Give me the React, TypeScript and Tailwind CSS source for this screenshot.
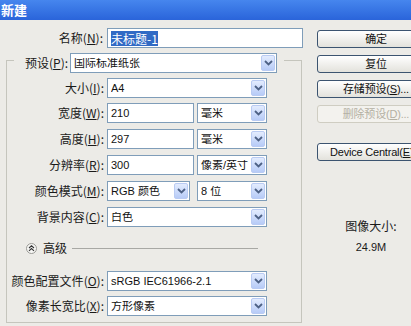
import React from "react";

function Arrow() {
  return (
    <div className="flex h-[16px] w-[14px] shrink-0 items-center justify-center rounded-[2px] border border-[#b9cbf3] bg-gradient-to-b from-[#e3ecfe] to-[#b7cbf7]">
      <svg width="9" height="6" viewBox="0 0 9 6">
        <polyline points="1,1 4.5,4.5 8,1" fill="none" stroke="#4d6185" strokeWidth="1.8" />
      </svg>
    </div>
  );
}

function Select({ value, w }: { value: string; w: string }) {
  return (
    <div className={`flex h-[20px] ${w} shrink-0 items-center border border-[#7f9db9] bg-white pl-[3px] pr-[1px] font-['Liberation_Sans','Noto_Sans_CJK_SC',sans-serif] text-[11px] text-[#111]`}>
      <span className="flex-1 truncate leading-none">{value}</span>
      <Arrow />
    </div>
  );
}

function Input({ value, w }: { value: string; w: string }) {
  return (
    <div className={`flex h-[20px] ${w} shrink-0 items-center border border-[#7f9db9] bg-white pl-[3px] font-['Liberation_Sans','Noto_Sans_CJK_SC',sans-serif] text-[11px] text-[#111]`}>
      <span className="leading-none">{value}</span>
    </div>
  );
}

function Label({ text, k }: { text: string; k: string }) {
  return (
    <div className="w-[100px] shrink-0 pr-[3px] text-right font-['Noto_Sans_CJK_SC',sans-serif] text-[12px] leading-none text-[#1a1a1a]">
      {text}(<u>{k}</u>):
    </div>
  );
}

function Row({ children, mt }: { children: React.ReactNode; mt: string }) {
  return <div className={`flex h-[20px] items-center ${mt}`}>{children}</div>;
}

function Btn({ children, disabled, mt }: { children: React.ReactNode; disabled?: boolean; mt: string }) {
  return (
    <div
      className={`flex h-[18px] w-[118px] items-center justify-center rounded-[3px] border ${mt} ${
        disabled
          ? "border-[#cfcdc2] bg-[#f3f2ee] text-[#b3b0a3]"
          : "border-[#3c5470] bg-gradient-to-b from-[#ffffff] to-[#e3e2dc] text-[#111]"
      } font-['Liberation_Sans','Noto_Sans_CJK_SC',sans-serif] text-[11px] leading-none tracking-[-0.2px] whitespace-nowrap`}
    >
      {children}
    </div>
  );
}

export default function App() {
  return (
    <div className="h-[326px] w-[411px] overflow-hidden bg-[#ecebe7]">
      <div className="flex h-[20px] items-center bg-gradient-to-b from-[#4686ee] to-[#2a64da] pl-[1px] font-['Noto_Sans_CJK_SC',sans-serif] text-[13px] font-bold text-white">
        新建
      </div>
      <div className="flex pt-[8px]">
        <div className="w-[303px] shrink-0">
          <div className="flex h-[20px] items-center">
            <div className="w-[104px] shrink-0 pr-[1px] text-right font-['Noto_Sans_CJK_SC',sans-serif] text-[12px] leading-none text-[#1a1a1a]">
              名称(<u>N</u>):
            </div>
            <div className="ml-[3px] flex h-[20px] w-[196px] items-center border border-[#7f9db9] bg-white pl-[3px] font-['Noto_Sans_CJK_SC',sans-serif] text-[12px]">
              <span className="bg-[#316ac5] leading-[15px] text-white">未标题-1</span>
            </div>
          </div>
          <fieldset className="ml-[6px] mt-[-1px] h-[276px] w-[296px] border border-[#c5c5bd] px-0 pb-0">
            <legend className="ml-[7px] pt-[6px]">
              <div className="flex h-[20px] items-center pl-[11px] pr-[7px]">
                <div className="pr-[2px] font-['Noto_Sans_CJK_SC',sans-serif] text-[12px] leading-none text-[#1a1a1a]">
                  预设(<u>P</u>):
                </div>
                <Select value="国际标准纸张" w="w-[207px]" />
              </div>
            </legend>
            <Row mt="mt-[5px]">
              <Label text="大小" k="I" />
              <Select value="A4" w="w-[160px]" />
            </Row>
            <Row mt="mt-[5px]">
              <Label text="宽度" k="W" />
              <Input value="210" w="w-[87px]" />
              <div className="w-[3px]" />
              <Select value="毫米" w="w-[70px]" />
            </Row>
            <Row mt="mt-[6px]">
              <Label text="高度" k="H" />
              <Input value="297" w="w-[87px]" />
              <div className="w-[3px]" />
              <Select value="毫米" w="w-[70px]" />
            </Row>
            <Row mt="mt-[6px]">
              <Label text="分辨率" k="R" />
              <Input value="300" w="w-[87px]" />
              <div className="w-[3px]" />
              <Select value="像素/英寸" w="w-[70px]" />
            </Row>
            <Row mt="mt-[6px]">
              <Label text="颜色模式" k="M" />
              <Select value="RGB 颜色" w="w-[83px]" />
              <div className="w-[7px]" />
              <Select value="8 位" w="w-[70px]" />
            </Row>
            <Row mt="mt-[6px]">
              <Label text="背景内容" k="C" />
              <Select value="白色" w="w-[160px]" />
            </Row>
            <div className="mt-[15px] flex h-[12px] items-center pl-[19px]">
              <svg width="11" height="11" viewBox="0 0 11 11">
                <circle cx="5.5" cy="5.5" r="5" fill="#f6f6f4" stroke="#9a9a96" />
                <polyline points="3,5 5.5,2.8 8,5" fill="none" stroke="#333" strokeWidth="1.1" />
                <polyline points="3,7.8 5.5,5.6 8,7.8" fill="none" stroke="#333" strokeWidth="1.1" />
              </svg>
              <span className="ml-[6px] font-['Noto_Sans_CJK_SC',sans-serif] text-[12px] leading-none text-[#1a1a1a]">高级</span>
              <div className="ml-[5px] h-[1px] w-[186px] bg-[#a8a8a4]" />
            </div>
            <Row mt="mt-[17px]">
              <Label text="颜色配置文件" k="O" />
              <Select value="sRGB IEC61966-2.1" w="w-[160px]" />
            </Row>
            <Row mt="mt-[5px]">
              <Label text="像素长宽比" k="X" />
              <Select value="方形像素" w="w-[160px]" />
            </Row>
          </fieldset>
        </div>
        <div className="ml-[14px] flex w-[118px] shrink-0 flex-col pt-[2px]">
          <Btn mt="mt-0">确定</Btn>
          <Btn mt="mt-[7px]">复位</Btn>
          <Btn mt="mt-[7px]">
            存储预设(<u>S</u>)...
          </Btn>
          <Btn mt="mt-[7px]" disabled>
            删除预设(<u>D</u>)...
          </Btn>
          <Btn mt="mt-[20px]">
            Device Central(<u>E</u>)...
          </Btn>
          <div className="mt-[59px] w-[108px] text-center font-['Noto_Sans_CJK_SC',sans-serif] text-[12px] leading-none text-[#1a1a1a]">
            图像大小:
          </div>
          <div className="mt-[10px] w-[108px] text-center font-['Liberation_Sans',sans-serif] text-[11px] leading-none text-[#1a1a1a]">
            24.9M
          </div>
        </div>
      </div>
    </div>
  );
}
